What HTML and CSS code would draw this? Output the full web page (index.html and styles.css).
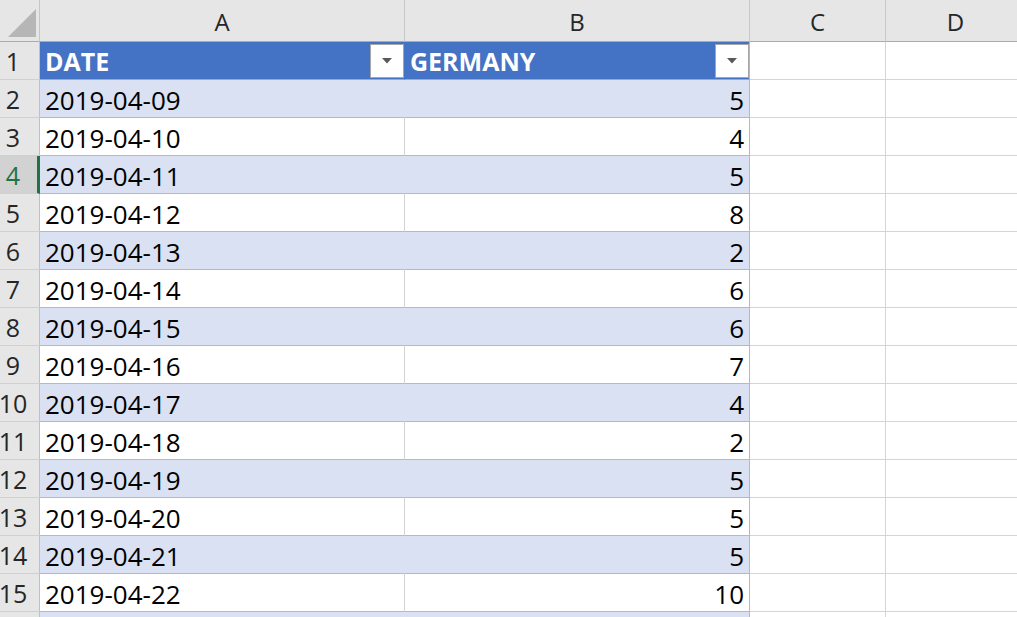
FILE: index.html
```html
<!DOCTYPE html>
<html>
<head>
<meta charset="utf-8">
<link rel="stylesheet" href="styles.css">
</head>
<body>
<div class="sheet">
  <div class="corner"><svg width="40" height="41" viewBox="0 0 40 41"><polygon points="8,37 36,37 36,9" fill="#b6b6b6"/></svg></div>
  <div class="colhead">A</div>
  <div class="colhead">B</div>
  <div class="colhead">C</div>
  <div class="colhead">D</div>

  <div class="rowhead">1</div>
  <div class="cell th a"><span>DATE</span><span class="dd"><svg width="10" height="6" viewBox="0 0 10 6"><polygon points="0,0 10,0 5,5.5" fill="#595959"/></svg></span></div>
  <div class="cell th b"><span>GERMANY</span><span class="dd"><svg width="10" height="6" viewBox="0 0 10 6"><polygon points="0,0 10,0 5,5.5" fill="#595959"/></svg></span></div>
  <div class="cell out"></div>
  <div class="cell out"></div>

  <div class="rowhead">2</div>
  <div class="cell band a">2019-04-09</div>
  <div class="cell band b num">5</div>
  <div class="cell out"></div><div class="cell out"></div>

  <div class="rowhead">3</div>
  <div class="cell plain a">2019-04-10</div>
  <div class="cell plain b num">4</div>
  <div class="cell out"></div><div class="cell out"></div>

  <div class="rowhead active">4</div>
  <div class="cell band a">2019-04-11</div>
  <div class="cell band b num">5</div>
  <div class="cell out"></div><div class="cell out"></div>

  <div class="rowhead">5</div>
  <div class="cell plain a">2019-04-12</div>
  <div class="cell plain b num">8</div>
  <div class="cell out"></div><div class="cell out"></div>

  <div class="rowhead">6</div>
  <div class="cell band a">2019-04-13</div>
  <div class="cell band b num">2</div>
  <div class="cell out"></div><div class="cell out"></div>

  <div class="rowhead">7</div>
  <div class="cell plain a">2019-04-14</div>
  <div class="cell plain b num">6</div>
  <div class="cell out"></div><div class="cell out"></div>

  <div class="rowhead">8</div>
  <div class="cell band a">2019-04-15</div>
  <div class="cell band b num">6</div>
  <div class="cell out"></div><div class="cell out"></div>

  <div class="rowhead">9</div>
  <div class="cell plain a">2019-04-16</div>
  <div class="cell plain b num">7</div>
  <div class="cell out"></div><div class="cell out"></div>

  <div class="rowhead">10</div>
  <div class="cell band a">2019-04-17</div>
  <div class="cell band b num">4</div>
  <div class="cell out"></div><div class="cell out"></div>

  <div class="rowhead">11</div>
  <div class="cell plain a">2019-04-18</div>
  <div class="cell plain b num">2</div>
  <div class="cell out"></div><div class="cell out"></div>

  <div class="rowhead">12</div>
  <div class="cell band a">2019-04-19</div>
  <div class="cell band b num">5</div>
  <div class="cell out"></div><div class="cell out"></div>

  <div class="rowhead">13</div>
  <div class="cell plain a">2019-04-20</div>
  <div class="cell plain b num">5</div>
  <div class="cell out"></div><div class="cell out"></div>

  <div class="rowhead">14</div>
  <div class="cell band a">2019-04-21</div>
  <div class="cell band b num">5</div>
  <div class="cell out"></div><div class="cell out"></div>

  <div class="rowhead">15</div>
  <div class="cell plain a">2019-04-22</div>
  <div class="cell plain b num">10</div>
  <div class="cell out"></div><div class="cell out"></div>

  <div class="rowhead"></div>
  <div class="cell band a"></div>
  <div class="cell band b num"></div>
  <div class="cell out"></div><div class="cell out"></div>
</div>
</body>
</html>
```
FILE: styles.css
```css
html, body {
  margin: 0;
  padding: 0;
  background: #ffffff;
  overflow: hidden;
}
body {
  font-family: "Open Sans", "Liberation Sans", sans-serif;
  color: #000;
}
.sheet {
  display: grid;
  grid-template-columns: 40px 365px 345px 136px 140px;
  grid-template-rows: 42px;
  grid-auto-rows: 38px;
  width: 1026px;
}
.sheet > div {
  box-sizing: border-box;
}
.corner {
  background: #e6e6e6;
  border-right: 1px solid #c6c6c6;
  border-bottom: 1px solid #ababab;
}
.corner svg { display: block; }
.colhead {
  background: #e6e6e6;
  border-right: 1px solid #c9c9c9;
  border-bottom: 1px solid #ababab;
  display: flex;
  align-items: center;
  justify-content: center;
  font-size: 24px;
  color: #262626;
  padding-top: 1px;
}
.rowhead {
  background: #e6e6e6;
  border-right: 1px solid #c0c0c0;
  border-bottom: 1px solid #d0d0d0;
  display: flex;
  align-items: center;
  justify-content: center;
  padding-right: 13px;
  font-size: 25px;
  color: #262626;
}
.rowhead.active {
  background: #d2d2d2;
  color: #217346;
  border-right: 3px solid #217346;
  padding-right: 11px;
}
.cell {
  display: flex;
  align-items: center;
  font-size: 26px;
  padding: 2px 5px 0 5px;
  white-space: nowrap;
}
.cell.num {
  justify-content: flex-end;
}
.cell.th {
  background: #4472c4;
  color: #ffffff;
  font-weight: 700;
  font-size: 25px;
  justify-content: space-between;
  padding: 0 0 0 5px;
  border-bottom: 1px solid #8ea9db;
}
.cell.th.a { border-right: 1px solid #4472c4; }
.cell.th.b { border-right: 1px solid #a9b9d9; }
.dd {
  width: 34px;
  height: 34px;
  box-sizing: border-box;
  background: #ffffff;
  border: 1px solid #a6a6a6;
  display: flex;
  align-items: center;
  justify-content: center;
}
.dd svg { display: block; }
.cell.band {
  background: #d9e1f2;
  border-bottom: 1px solid #a9bbdc;
}
.cell.band.a { border-right: 1px solid #d9e1f2; }
.cell.plain {
  background: #ffffff;
  border-bottom: 1px solid #a9bbdc;
}
.cell.plain.a { border-right: 1px solid #d4d4d4; }
.cell.b { border-right: 1px solid #a9b9d9; }
.cell.out {
  background: #ffffff;
  border-right: 1px solid #d4d4d4;
  border-bottom: 1px solid #d4d4d4;
}
```
